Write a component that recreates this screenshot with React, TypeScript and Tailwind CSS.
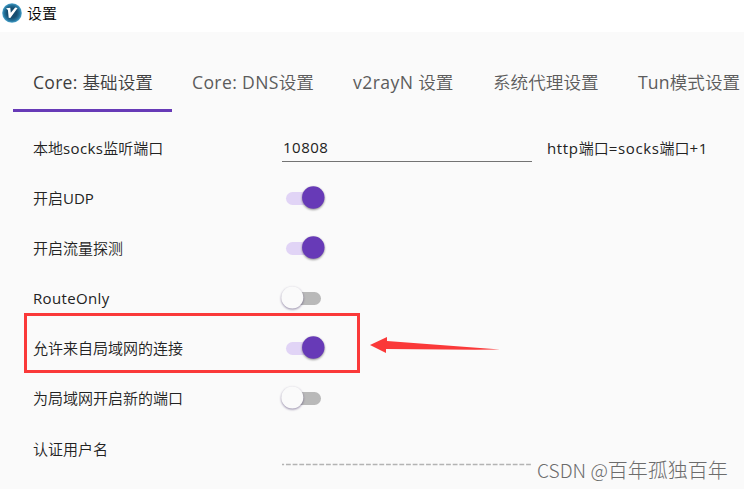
import React from "react";

const tabs = [
  { latin: "Core: ", cjk: "基础设置", box: "w-[159px]", tracking: "tracking-[0.25px]" },
  { latin: "Core: DNS", cjk: "设置", box: "w-[161px]", tracking: "tracking-[0.35px]" },
  { latin: "v2rayN ", cjk: "设置", box: "w-[140px]", tracking: "tracking-[0.4px]" },
  { latin: "", cjk: "系统代理设置", box: "w-[145px]", tracking: "" },
  { latin: "Tun", cjk: "模式设置", box: "w-[142px]", tracking: "tracking-[0.15px]" },
];

function Latin({
  children,
  className = "tracking-[0.35px]",
}: {
  children: React.ReactNode;
  className?: string;
}) {
  return (
    <span className={`font-['Open_Sans','Noto_Sans',sans-serif] font-normal ${className}`}>{children}</span>
  );
}

function Toggle({ on = false }: { on?: boolean }) {
  return (
    <svg className="block h-[30px] w-[50px]" viewBox="0 0 50 30">
      {on ? (
        <>
          <rect x="9" y="9" width="35" height="13" rx="6.5" fill="#e1d4f6" />
          <circle className="drop-shadow-[0_1px_1px_rgba(0,0,0,0.45)]" cx="36.3" cy="14.5" r="11.2" fill="#673ab7" />
        </>
      ) : (
        <>
          <rect x="9" y="9" width="35" height="13" rx="6.5" fill="#b9b9b9" />
          <circle className="drop-shadow-[0_1px_1px_rgba(40,20,80,0.5)]" cx="15.3" cy="14.5" r="11" fill="#fafafa" />
        </>
      )}
    </svg>
  );
}

function Row({ label, children }: { label: React.ReactNode; children?: React.ReactNode }) {
  return (
    <div className="flex h-[50px] shrink-0 items-center">
      <div className="w-[282px] shrink-0 whitespace-nowrap pl-[33px]">{label}</div>
      {children}
    </div>
  );
}

function SwitchRow({ label, on }: { label: React.ReactNode; on?: boolean }) {
  return (
    <Row label={label}>
      <div className="-ml-[5px]">
        <Toggle on={on} />
      </div>
    </Row>
  );
}

export default function App() {
  return (
    <div className="relative flex h-[489px] w-[744px] flex-col overflow-hidden bg-[#fafafa] font-['Noto_Sans_CJK_SC',sans-serif] text-[15px] font-[350] leading-[20px] text-[#222]">
      <header className="flex h-8 shrink-0 items-center bg-white pb-[6px] text-black">
        <svg className="ml-[2px] h-5 w-5" viewBox="0 0 20 20">
          <defs>
            <radialGradient id="disc">
              <stop offset="0.5" stopColor="#164d70" />
              <stop offset="0.8" stopColor="#24739b" />
              <stop offset="1" stopColor="#4ba3cc" />
            </radialGradient>
          </defs>
          <circle cx="10" cy="10" r="9.8" fill="url(#disc)" />
          <path d="M4 5.2 8.3 4.8 8.8 9.8 13.2 4.6 15.6 4.9 8.3 15 6.7 14.8 5.9 6.9Z" fill="#fff" />
        </svg>
        <span className="ml-[5px]">设置</span>
      </header>

      <nav className="flex h-20 shrink-0 whitespace-nowrap pl-[13px] text-[17.6px] leading-[24px] text-[#5c5c5c]">
        {tabs.map((tab, i) => (
          <div
            key={tab.cjk + tab.latin}
            className={`flex shrink-0 justify-start border-b-[3px] pl-5 pt-[38px] ${tab.box} ${
              i === 0 ? "border-[#673ab7] text-[#3e3e3e]" : "border-transparent"
            }`}
          >
            <span className="whitespace-pre">
              <Latin className={tab.tracking}>{tab.latin}</Latin>
              {tab.cjk}
            </span>
          </div>
        ))}
      </nav>

      <main className="flex flex-col pt-[11px]">
        <Row label={<>本地<Latin>socks</Latin>监听端口</>}>
          <div className="-mt-[2px] flex h-[30px] w-[250px] items-center border-b-[1.5px] border-[#737373] pl-[1px]">
            <Latin className="tracking-[0.5px]">10808</Latin>
          </div>
          <div className="ml-[15px] whitespace-nowrap">
            <Latin className="tracking-[0.65px]">http</Latin>端口
            <Latin className="tracking-[0.65px]">=socks</Latin>端口
            <Latin className="tracking-[0.65px]">+1</Latin>
          </div>
        </Row>
        <SwitchRow label={<>开启<Latin className="">UDP</Latin></>} on />
        <SwitchRow label="开启流量探测" on />
        <SwitchRow label={<Latin>RouteOnly</Latin>} />
        <SwitchRow label="允许来自局域网的连接" on />
        <SwitchRow label="为局域网开启新的端口" />
        <Row label={<span className="relative top-px">认证用户名</span>}>
          <svg className="mt-[32px] h-[3px] w-[250px]" viewBox="0 0 250 3">
            <path d="M0 1.5H250" stroke="#b3b3b3" strokeWidth="1.7" strokeDasharray="4.8 1.87" strokeDashoffset="2.7" />
          </svg>
        </Row>
      </main>

      <div className="absolute left-[24px] top-[313px] h-[60px] w-[336px] border-[3px] border-[#fa3939]" />
      <svg className="absolute left-[370px] top-[336px] h-[18px] w-[132px]" viewBox="0 0 132 18">
        <path d="M0 9 17 1V5L130 13.5 105 13.7 16 13V17Z" fill="#fa3939" />
      </svg>
      <div className="absolute left-[537px] top-[457px] whitespace-nowrap text-[20px] font-light leading-[26px] text-[#6c6c6c]">
        <span className="text-[19.2px]">CSDN @</span>
        <span>百年孤独百年</span>
      </div>
    </div>
  );
}
